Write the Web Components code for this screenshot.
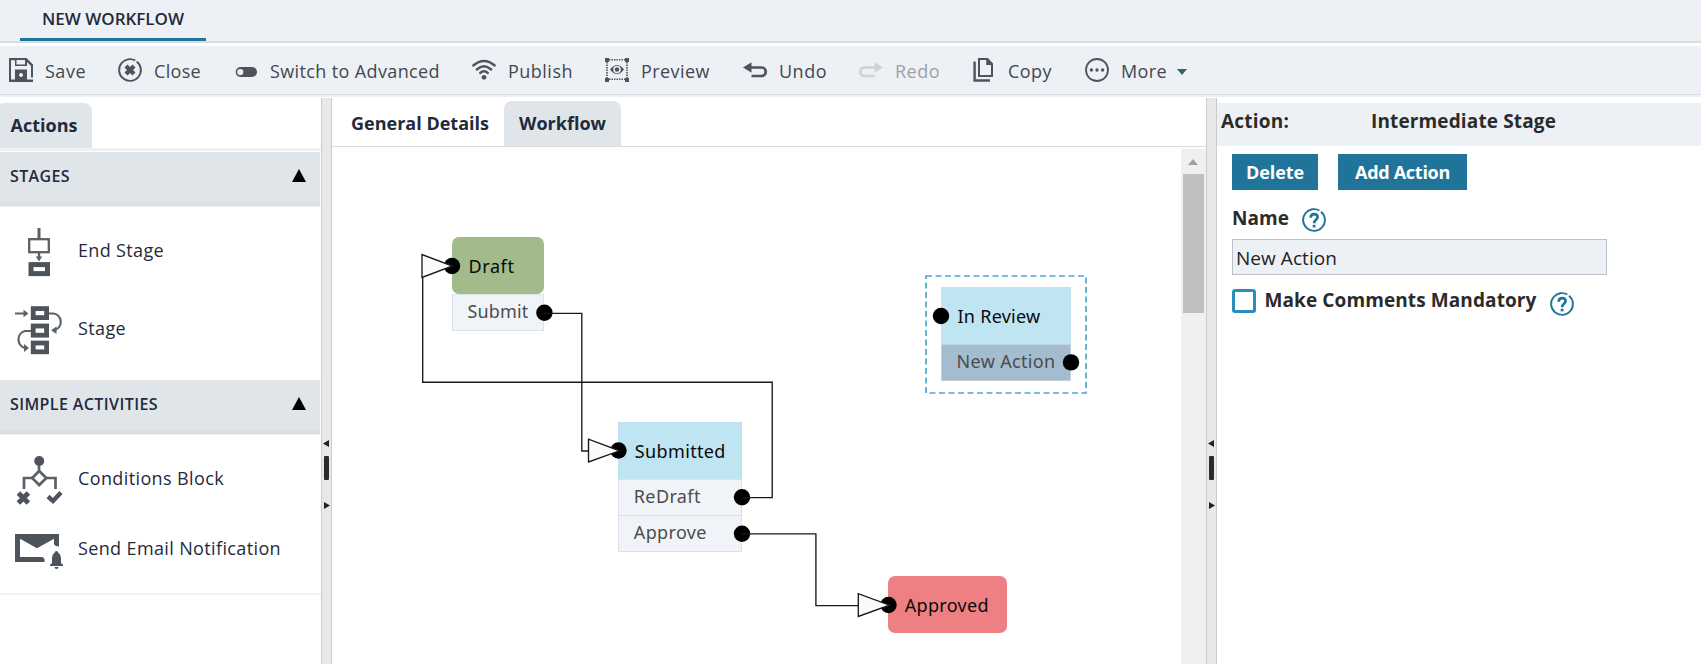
<!DOCTYPE html>
<html lang="en">
<head>
<meta charset="utf-8">
<title>New Workflow</title>
<style>
html,body{margin:0;height:100%;overflow:hidden;background:#fff}
body{font-family:"Open Sans","Noto Sans",sans-serif;font-size:18px;line-height:20px;color:#1f2b3d}
</style>
</head>
<body>
<workflow-app></workflow-app>
<script>
const define = (name, html, setup) => customElements.define(name, class extends HTMLElement {
  connectedCallback() {
    if (this.shadowRoot) return;
    const t = document.createElement('template');
    t.innerHTML = html;
    this.attachShadow({ mode: 'open' }).append(t.content.cloneNode(true));
    if (setup) setup.call(this, this.shadowRoot);
  }
});

const G = '#4d545b';
const ICONS = {
  save: ['0 0 24 24', `<path fill="${G}" fill-rule="evenodd" d="M0 0H17.5L24 6.5V19.5H22V8L18 4V8H6V2.2H2V21.5H6V11.5H18V21.5H24V24H0zM7.5 2V6.5H16V2zM12 15a2 2 0 1 0 .01 0z"/>`],
  close: ['0 0 24 24', `<circle cx="12" cy="12" r="10.9" fill="none" stroke="${G}" stroke-width="1.9" stroke-dasharray="66.3 2.2" transform="rotate(-52 12 12)"/><path d="M8 8l8 8M16 8l-8 8" stroke="${G}" stroke-width="4.3"/>`],
  toggle: ['0 0 24 24', `<rect x="1.7" y="9" width="21.3" height="10" rx="5" fill="${G}"/><circle cx="6.3" cy="14" r="3.1" fill="#edf1f5"/>`],
  publish: ['0 0 24 24', `<g fill="none" stroke="${G}" stroke-width="2.4" stroke-linecap="round"><path d="M1.3 7.5Q12-1.7 22.7 7.5M4.8 11.5Q12 5 19.2 11.5M8.2 15Q12 11.6 15.8 15"/></g><circle cx="12" cy="19.3" r="2.4" fill="${G}"/>`],
  preview: ['0 0 24 24', `<path d="M4 1.7H20M4 21.3H20M2 4V20M22 4V20" stroke="${G}" stroke-width="1.6" stroke-dasharray="1.5 1"/><path d="M0 0h4v4H0zM20 0h4v4h-4zM0 20h4v4H0zM20 20h4v4h-4z" fill="${G}"/><path d="M5 11.5Q12 2.5 19 11.5Q12 20.5 5 11.5z" fill="${G}"/><circle cx="12" cy="11.5" r="3" fill="${G}" stroke="#edf1f5" stroke-width="1.5"/>`],
  undo: ['0 0 24 24', `<path d="M6 9.5H18.5A4.2 4.2 0 0 1 18.5 18H8.5" fill="none" stroke="${G}" stroke-width="2.7"/><path d="M0 9.5L8.5 4.3V14.7z" fill="${G}"/>`],
  redo: ['0 0 24 24', `<path d="M18 9.5H5.5A4.2 4.2 0 0 0 5.5 18H15.5" fill="none" stroke="${G}" stroke-width="2.7"/><path d="M24 9.5L15.5 4.3V14.7z" fill="${G}"/>`],
  copy: ['0 0 24 24', `<path d="M7 1H15.5L20 6V18H7z" fill="none" stroke="${G}" stroke-width="2"/><path d="M14.2 0L21 7H14.2z" fill="${G}"/><path d="M2.6 3.5V22.5H18" fill="none" stroke="${G}" stroke-width="2.4"/>`],
  more: ['0 0 24 24', `<circle cx="12" cy="12" r="11" fill="none" stroke="${G}" stroke-width="1.8"/><g fill="${G}"><circle cx="6.4" cy="12" r="1.7"/><circle cx="12" cy="12" r="1.7"/><circle cx="17.6" cy="12" r="1.7"/></g>`],
  endstage: ['0 0 48 48', `<g fill="none" stroke="#5a6167"><path d="M24 0V11" stroke-width="3"/><rect x="14.2" y="11.2" width="19.6" height="13" stroke-width="2.3"/><path d="M24 25V30" stroke-width="2.4"/></g><path d="M20.8 28.5h6.4L24 33.5z" fill="#5a6167"/><rect x="16" y="36.6" width="16.5" height="9" fill="none" stroke="${G}" stroke-width="5"/>`],
  stage: ['0 0 48 48', `<g fill="none" stroke="${G}" stroke-width="4.8"><rect x="18.2" y="2.6" width="13.4" height="9"/><rect x="18.2" y="20" width="13.4" height="9.2"/><rect x="18.2" y="37" width="13.4" height="8.8"/></g><path d="M0 7.5H11M34 7.5H38A8.5 8.5 0 0 1 40 24M16 25H10A8.8 8.8 0 0 0 10 42H11" fill="none" stroke="#5a6167" stroke-width="2.2"/><path d="M8.5 3.7L13.5 7.5L8.5 11.3zM41.5 20.5L36 24.2L41.5 28zM9 38L14 42L9 46z" fill="#5a6167"/>`],
  conditions: ['0 0 48 48', `<g fill="none" stroke="#5a6167" stroke-width="2.7"><path d="M24 8V16M9 33V22H18M30 22H40.5V33"/><path d="M24.2 15L31.3 22L24.2 29L17.2 22z"/></g><circle cx="24.2" cy="5" r="5" fill="${G}"/><path d="M3.4 37L13.4 47M13.4 37L3.4 47" stroke="${G}" stroke-width="5"/><path d="M33 40.5L38 45L46 36.5" fill="none" stroke="${G}" stroke-width="4.4"/>`],
  email: ['0 0 48 36', `<path fill="${G}" fill-rule="evenodd" d="M0 0H44V12.5Q40 12.5 39 10V4.8L22 14.2L5 4.8V23H27Q30 23.5 29.5 28H0z"/><path fill="${G}" d="M41.4 17a2 2 0 0 1 1.8 1.8Q46 20.5 46 25V29L48 30.8V32H35V30.8L37 29V25Q37 20.5 39.6 18.8A2 2 0 0 1 41.4 17zM39.5 33h4a2 2 0 0 1-4 0z"/>`],
  help: ['0 0 24 24', `<circle cx="12" cy="12" r="10.9" fill="none" stroke="#217499" stroke-width="1.9" stroke-dasharray="66 2.5" transform="rotate(-50 12 12)"/><path d="M8.7 9.7C8.8 5 15.8 5 15.6 9.2C15.4 12 12.1 11.5 12.1 15.2" fill="none" stroke="#217499" stroke-width="2.7"/><rect x="10.7" y="16.8" width="2.8" height="2.6" fill="#217499"/>`]
};

define('ui-icon', `<style>:host{display:block;flex:none}svg{display:block;width:100%;height:100%;overflow:visible}</style>`, function (root) {
  const [box, art] = ICONS[this.getAttribute('name')];
  root.innerHTML += `<svg viewBox="${box}">${art}</svg>`;
});

/* A one-line label whose tracking is adjusted to a given width. */
define('ui-label', `<style>:host{display:inline-block;white-space:nowrap;flex:none}</style><span><slot></slot></span>`, function (root) {
  const want = +this.getAttribute('fit');
  if (!want) return;
  const span = root.querySelector('span');
  const have = span.getBoundingClientRect().width;
  this.style.width = want + 'px';
  span.style.letterSpacing = ((want - have) / this.textContent.length).toFixed(3) + 'px';
});

define('app-header', `<style>
:host{display:block;height:41px;background:#edf1f5;border-bottom:2px solid #d9dde1;padding-left:20px;margin-bottom:3px}
.tab{box-sizing:border-box;width:186px;height:41px;border-bottom:3px solid #21759b;padding:9px 0 0 22px;font-size:17px;font-weight:650}
</style><div class="tab"><ui-label fit="142">NEW WORKFLOW</ui-label></div>`);

customElements.define('app-toolbar', class extends HTMLElement {
  connectedCallback() {
    const items = [['save','Save',41],['close','Close',47],['toggle','Switch to Advanced',170],['publish','Publish',65],['preview','Preview',69],['undo','Undo',48],['redo','Redo',45],['copy','Copy',44],['more','More',46]];
    this.attachShadow({ mode: 'open' }).innerHTML = `<style>
:host{display:grid;grid-template-columns:109px 116px 238px 133px 138px 116px 113px 113px 120px;box-sizing:border-box;height:51px;padding:0 0 3px 9px;background:linear-gradient(#d8dde3,#d8dde3) 0 48px/100% 1px no-repeat #edf1f5}
.b{display:flex;gap:12px;align-items:center;color:#42484e;font-weight:500}
.b.redo{opacity:.48}.b.redo ui-icon{opacity:.4}
ui-icon{width:24px;height:24px}
ui-label{padding-top:1px}
.caret{width:0;height:0;border:5.5px solid transparent;border-top:6px solid #3f5f6e;border-bottom:0;margin:3px 0 0 -2px}
</style>` + items.map(([i, t, w]) => `<div class="b ${i}"><ui-icon name="${i}"></ui-icon><ui-label fit="${w}">${t}</ui-label>${i === 'more' ? '<span class="caret"></span>' : ''}</div>`).join('');
  }
});

define('action-group', `<style>
:host{display:block;width:320px}
header{display:flex;justify-content:space-between;align-items:center;box-sizing:border-box;height:54px;padding:0 14px 3px 10px;background:#e0e5e9;border-bottom:4px solid #dcdfe1;font-size:16px;font-weight:600;box-shadow:0 1px 1px #f1f1f1}
i{width:0;height:0;border:7.5px solid transparent;border-top:0;border-bottom:13px solid #000}
::slotted([slot=title]){padding-top:1px}
</style><header><slot name="title"></slot><i></i></header><slot></slot>`);

define('action-item', `<style>
:host{display:flex;align-items:center;gap:15px;padding-left:15px;height:48px;font-weight:450}
ui-icon{width:48px;height:48px}
:host([icon=email]) ui-icon{height:36px}
::slotted(ui-label){padding-bottom:4px}
:host([icon=email]) ::slotted(ui-label){padding-bottom:8px}
</style><slot name="icon"></slot><slot></slot>`, function (root) {
  const ic = document.createElement('ui-icon');
  ic.setAttribute('name', this.getAttribute('icon'));
  root.querySelector('slot').replaceWith(ic);
});

define('actions-panel', `<style>
:host{display:block;overflow:hidden;padding-top:6px}
.tab{box-sizing:border-box;width:92px;height:45px;background:#e0e5e9;border-radius:3px 8px 0 0;padding:12px 0 0 10.5px;font-weight:700}
.rule{height:3px;background:#f0f0f0;margin-bottom:1px}
.end{height:2px;background:#f2f2f2;margin-top:17px}
</style>
<div class="tab"><ui-label fit="67">Actions</ui-label></div><div class="rule"></div>
<action-group><ui-label slot="title" fit="60">STAGES</ui-label>
<action-item icon="endstage" style="margin-top:22px"><ui-label fit="86">End Stage</ui-label></action-item>
<action-item icon="stage" style="margin:30px 0 26px"><ui-label fit="48">Stage</ui-label></action-item></action-group>
<action-group><ui-label slot="title" fit="148">SIMPLE ACTIVITIES</ui-label>
<action-item icon="conditions" style="margin-top:22px"><ui-label fit="146">Conditions Block</ui-label></action-item>
<action-item icon="email" style="margin-top:24px"><ui-label fit="203">Send Email Notification</ui-label></action-item></action-group>
<div class="end"></div>`);

define('pane-splitter', `<style>
:host{display:block;box-sizing:border-box;width:11px;margin-top:1px;background:#e8e8e8;border:solid #ccc;border-width:0 1px}
svg{display:block}
</style><svg width="9" height="566"><path d="M1 345.5L7 342V349zM8 407.5L2 404V411z" fill="#222"/><rect x="2" y="358" width="5" height="24" rx="1" fill="#2b2b2b"/></svg>`);

define('center-tabs', `<style>
:host{display:flex;box-sizing:border-box;height:50px;padding:4px 0 0 20px;border-bottom:1px solid #d9dcdf;font-weight:700}
div{padding-top:12px;box-sizing:border-box}
.on{background:#e0e5e9;border-radius:8px 8px 0 0;width:117px;margin-left:15px;padding-left:15px}
ui-label{margin-left:-1px}
.on ui-label{margin-left:0}
</style><div><ui-label fit="138">General Details</ui-label></div><div class="on"><ui-label fit="87">Workflow</ui-label></div>`);

customElements.define('workflow-canvas', class extends HTMLElement {
  connectedCallback() {
    const node = (x, y, w, color, r, title, fit, rows = []) => `<div class="node" style="left:${x - 332}px;top:${y - 147}px;width:${w}px"><div class="head" style="background:${color};border-radius:${r}px"><ui-label fit="${fit}">${title}</ui-label></div>${rows.map(([t, f, c]) => `<div class="row ${c || ''}"><ui-label fit="${f}">${t}</ui-label></div>`).join('')}</div>`;
    const dots = [[452,266],[544.4,312.7],[618.5,450.5],[742,497.2],[742,533.8],[888.5,605],[941,316],[1071,362.4]];
    this.attachShadow({ mode: 'open' }).innerHTML = `<style>
:host{display:block;position:relative;overflow:hidden;color:#0a0a0a;font-family:"Noto Sans",sans-serif}
.node{position:absolute}
.head{box-sizing:border-box;height:57px;padding:19px 0 0 16.5px}
.row{box-sizing:border-box;height:36.8px;padding:6px 0 0 14.5px;background:#f0f4f8;border:1px solid #dde2e8;color:#4c4c4c;font-weight:450}
.row+.row{border-top:0}
.sel{background:#a3bccf;border-color:#c5d0da}
svg{position:absolute;left:0;top:0}
</style>
${node(452,237,92.3,'#a2bb8b',7,'Draft',46,[['Submit',61]])}
${node(618.3,421.8,124,'#bfe4f2',0,'Submitted',91,[['ReDraft',67],['Approve',73]])}
${node(888.3,576.4,118.5,'#ee8083',7,'Approved',84)}
${node(941,287.3,130,'#bfe4f2',0,'In Review',83,[['New Action',99,'sel']])}
<svg width="849" height="517" viewBox="332 147 849 517">
<rect x="926" y="276" width="160" height="117" fill="none" stroke="#48a8d0" stroke-width="1.7" stroke-dasharray="6 3.5"/>
${dots.map(([x, y]) => `<circle cx="${x}" cy="${y}" r="8.2"/>`).join('')}
<g fill="none" stroke="#1a1a1a" stroke-width="1.35"><path d="M544 313.3H581.8V451H588M742 497.6H772.2V382.2H422.7V278M742 533.8H815.9V605.6H858"/>
<g fill="#fafafa"><path d="M422 254.5V277.5L452.5 266zM588.5 439.2V462L619.5 450.8zM858.3 593.6V616.5L889.5 605.2z"/></g></g></svg>`;
  }
});

define('canvas-scrollbar', `<style>
:host{display:flow-root;width:25px;margin-top:2px;background:#f0f0f0}
.up{width:0;height:0;border:5.5px solid transparent;border-top:0;border-bottom:6px solid #a0a0a0;margin:10px 0 9px 7px}
.thumb{width:21px;height:139px;background:#c0c0c0;margin-left:2px}
</style><div class="up"></div><div class="thumb"></div>`);

define('ui-button', `<style>
:host{display:block;box-sizing:border-box;height:36px;background:#217499;color:#fff;font-weight:700;padding:8px 0 0 15px}
</style><slot></slot>`);

define('details-panel', `<style>
:host{display:block;padding-top:6px;color:#2b2b2b;font-size:19px;font-weight:700;line-height:24px}
header{display:flex;box-sizing:border-box;height:43px;background:#edf1f5;padding:6px 0 0 4px;gap:82px}
.form{padding:8px 0 0 15px}
.row{display:flex}
.input{box-sizing:border-box;width:375px;height:36px;background:#edf1f5;border:1px solid #bcc0c8;padding:6px 0 0 3px;font-weight:400;color:#222}
.check{box-sizing:border-box;width:24px;height:24px;border:3px solid #2a8dbe;border-radius:3px;background:#fff}
ui-icon{width:24px;height:24px}
ui-button{font-size:18px;line-height:20px}
</style>
<header><ui-label fit="68">Action:</ui-label><ui-label fit="185">Intermediate Stage</ui-label></header>
<div class="form">
<div class="row" style="gap:20px"><ui-button style="width:86px;padding-left:14px"><ui-label fit="58">Delete</ui-label></ui-button><ui-button style="width:129px;padding-left:17px"><ui-label fit="95">Add Action</ui-label></ui-button></div>
<div class="row" style="gap:13px;margin-top:16px;height:33px"><ui-label fit="57">Name</ui-label><ui-icon name="help" style="margin-top:2px"></ui-icon></div>
<div class="input"><ui-label fit="101">New Action</ui-label></div>
<div class="row" style="margin-top:14px"><span class="check"></span><ui-label fit="272" style="margin:-1px 13px 0 8.5px">Make Comments Mandatory</ui-label><ui-icon name="help" style="margin-top:3px"></ui-icon></div>
</div>`);

define('workflow-app', `<style>
:host{display:flex;flex-direction:column;height:664px;overflow:hidden}
main{display:grid;grid-template-columns:321px 11px 874px 11px 1fr;flex:1;min-height:0}
.center{display:flex;flex-direction:column;min-height:0}
.stage{display:flex;flex:1;min-height:0}
workflow-canvas{flex:1}
</style><app-header></app-header><app-toolbar></app-toolbar>
<main><actions-panel></actions-panel><pane-splitter></pane-splitter>
<div class="center"><center-tabs></center-tabs><div class="stage"><workflow-canvas></workflow-canvas><canvas-scrollbar></canvas-scrollbar></div></div>
<pane-splitter></pane-splitter><details-panel></details-panel></main>`);
</script>
</body>
</html>
